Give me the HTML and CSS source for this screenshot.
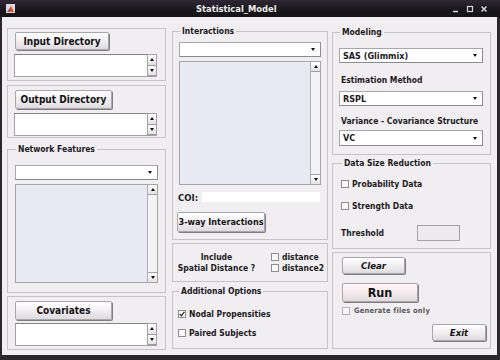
FILE: index.html
```html
<!DOCTYPE html>
<html lang="en">
<head>
    <meta charset="UTF-8">
    <title>Statistical_Model</title>
    <link rel="stylesheet" href="styles.css">
</head>
<body>
    <div class="window">
        <div class="titlebar">
            <span class="app-icon">
                <svg width="9" height="9" viewBox="0 0 9 9">
                    <rect width="9" height="9" fill="#d9d6dc"/>
                    <path d="M1 8 L3.5 4.5 L5 2 L6.5 5 L8 8 Z" fill="#e0531a"/>
                    <path d="M1 8 L3.5 4.5 L4.5 6 Z" fill="#3f6fb5"/>
                </svg>
            </span>
            <span class="title">Statistical_Model</span>
            <span class="controls">
                <svg width="40" height="9" viewBox="0 0 40 9">
                    <path d="M0 7.5 H5" stroke="#d6d6d6" stroke-width="1.5"/>
                    <rect x="14.5" y="2.5" width="5" height="5" fill="none" stroke="#d6d6d6" stroke-width="1.2"/>
                    <path d="M28.5 2.5 L33.5 7.5 M33.5 2.5 L28.5 7.5" stroke="#d6d6d6" stroke-width="1.5"/>
                </svg>
            </span>
        </div>

        <div class="content">
            <!-- left column -->
            <div class="col col-left">
                <div class="box dir-box">
                    <button class="btn btn-dir">Input Directory</button>
                    <div class="spin-field">
                        <div class="field"></div>
                        <div class="spin"><span class="spin-btn"><i class="tri up"></i></span><span class="spin-btn"><i class="tri down"></i></span></div>
                    </div>
                </div>
                <div class="box dir-box out-box">
                    <button class="btn btn-out">Output Directory</button>
                    <div class="spin-field">
                        <div class="field"></div>
                        <div class="spin"><span class="spin-btn"><i class="tri up"></i></span><span class="spin-btn"><i class="tri down"></i></span></div>
                    </div>
                </div>
                <fieldset class="group network">
                    <legend>Network Features</legend>
                    <div class="combo"><span></span><i class="tri down"></i></div>
                    <div class="list list-net">
                        <div class="vscroll"><span class="sb-btn"><i class="tri up"></i></span><span class="sb-btn"><i class="tri down"></i></span></div>
                    </div>
                </fieldset>
                <div class="box cov-box">
                    <button class="btn btn-cov">Covariates</button>
                    <div class="spin-field">
                        <div class="field"></div>
                        <div class="spin"><span class="spin-btn"><i class="tri up"></i></span><span class="spin-btn"><i class="tri down"></i></span></div>
                    </div>
                </div>
            </div>

            <!-- middle column -->
            <div class="col col-mid">
                <fieldset class="group interactions">
                    <legend>Interactions</legend>
                    <div class="combo"><span></span><i class="tri down"></i></div>
                    <div class="list list-int">
                        <div class="vscroll"><span class="sb-btn"><i class="tri up"></i></span><span class="sb-btn"><i class="tri down"></i></span></div>
                    </div>
                    <div class="coi-row">
                        <span class="coi-label">COI:</span>
                        <span class="coi-field"></span>
                    </div>
                    <button class="btn btn-3way">3-way Interactions</button>
                </fieldset>
                <div class="box include">
                    <div class="include-text">Include<br>Spatial Distance ?</div>
                    <div class="include-checks">
                        <label class="check"><span class="cb"></span>distance</label>
                        <label class="check"><span class="cb"></span>distance2</label>
                    </div>
                </div>
                <fieldset class="group options">
                    <legend>Additional Options</legend>
                    <label class="check"><span class="cb checked"><svg width="6" height="6" viewBox="0 0 6 6"><path d="M0.8 3 L2.4 4.8 L5.4 0.8" fill="none" stroke="#222" stroke-width="1.2"/></svg></span>Nodal Propensities</label>
                    <label class="check"><span class="cb"></span>Paired Subjects</label>
                </fieldset>
            </div>

            <!-- right column -->
            <div class="col col-right">
                <fieldset class="group modeling">
                    <legend>Modeling</legend>
                    <div class="combo"><span>SAS (Glimmix)</span><i class="tri down"></i></div>
                    <div class="field-label est">Estimation Method</div>
                    <div class="combo combo-rspl"><span>RSPL</span><i class="tri down"></i></div>
                    <div class="field-label var">Variance - Covariance Structure</div>
                    <div class="combo combo-vc"><span>VC</span><i class="tri down"></i></div>
                </fieldset>
                <fieldset class="group reduction">
                    <legend>Data Size Reduction</legend>
                    <label class="check"><span class="cb"></span>Probability Data</label>
                    <label class="check"><span class="cb"></span>Strength Data</label>
                    <div class="threshold-row">
                        <span>Threshold</span>
                        <span class="threshold-field"></span>
                    </div>
                </fieldset>
                <div class="box actions">
                    <button class="btn btn-clear">Clear</button>
                    <button class="btn btn-run">Run</button>
                    <label class="check gen"><span class="cb"></span>Generate files only</label>
                    <button class="btn btn-exit">Exit</button>
                </div>
            </div>
        </div>
    </div>
</body>
</html>
```

FILE: styles.css
```css
* {
    box-sizing: border-box;
    margin: 0;
    padding: 0;
}

body {
    font-family: "DejaVu Sans Condensed", "DejaVu Sans", sans-serif;
    font-weight: bold;
    font-size: 8.5px;
    color: #1c1b1d;
    background: #fff;
}

.window {
    width: 500px;
    height: 360px;
    background: #2a282c;
    display: flex;
    flex-direction: column;
}

/* title bar */
.titlebar {
    height: 17px;
    display: flex;
    align-items: center;
    padding-left: 6px;
    background: linear-gradient(#2f2735, #19171b 60%, #141316);
    color: #ececec;
}

.app-icon svg {
    display: block;
}

.title {
    margin-left: 181px;
    font-size: 9.3px;
    line-height: 17px;
}

.controls {
    margin-left: auto;
    margin-right: 7px;
}

.controls svg {
    display: block;
}

/* window body */
.content {
    flex: 1;
    margin: 0 3px 5px 2px;
    background: #f1eef1;
    display: flex;
    padding: 8px 0 0 5px;
}

.col {
    display: flex;
    flex-direction: column;
}

.col-left {
    width: 159px;
    margin-top: 3px;
}

.col-mid {
    width: 156px;
    margin-left: 6px;
}

.col-right {
    width: 159px;
    margin-left: 4px;
    margin-top: 1px;
}

.box {
    border: 1px solid #c6c3c7;
}

.group {
    border: 1px solid #c6c3c7;
    min-width: 0;
}

.group legend {
    line-height: 12px;
    padding: 0 2px;
    margin-left: 1px;
}

/* buttons */
.btn {
    display: block;
    font: inherit;
    color: #141314;
    height: 18px;
    border: 1px solid #a9a7ab;
    border-radius: 2px;
    background: linear-gradient(#ffffff, #f2f0f3 45%, #dedcdf);
    box-shadow: 1px 1px 0 #7f7d81;
    font-size: 10px;
    text-align: center;
}

/* text fields with spinner */
.field {
    flex: 1;
    background: #fff;
    border: 1px solid #a3a1a5;
    border-top-color: #858387;
    border-right: none;
}

.spin-field {
    display: flex;
    width: 143px;
    height: 23px;
}

.spin {
    width: 10px;
    display: flex;
    flex-direction: column;
    border: 1px solid #a3a1a5;
    background: #fff;
}

.spin-btn {
    flex: 1;
    display: flex;
    align-items: center;
    justify-content: center;
    background: linear-gradient(#fff, #e3e1e4);
    border-bottom: 1px solid #9b999d;
}

.tri {
    display: block;
    width: 0;
    height: 0;
    border-left: 2.5px solid transparent;
    border-right: 2.5px solid transparent;
}

.tri.up {
    border-bottom: 3px solid #111;
}

.tri.down {
    border-top: 3px solid #111;
}

/* left column */
.dir-box {
    height: 53px;
    padding: 3px 0 0 6px;
}

.dir-box .btn {
    margin-left: 1px;
    margin-bottom: 4px;
}

.btn-dir {
    width: 94px;
}

.out-box {
    margin-top: 4px;
    padding-top: 4px;
}

.btn-out {
    width: 97px;
    height: 19px;
}

.network {
    height: 150px;
    margin-top: 5px;
    padding: 10px 7px 0 7px;
}

.combo {
    height: 15px;
    display: flex;
    align-items: center;
    padding: 0 5px 0 3px;
    background: #fff;
    border: 1px solid #a8a6aa;
    border-bottom-color: #8c8a8e;
    border-right-color: #8c8a8e;
    font-size: 9px;
}

.combo .tri {
    margin-left: auto;
}

.list {
    display: flex;
    justify-content: flex-end;
    margin-top: 4px;
    background: #e7e9f3;
    border: 1px solid #a6a4a8;
}

.list-net {
    height: 99px;
}

.vscroll {
    width: 10px;
    display: flex;
    flex-direction: column;
    justify-content: space-between;
    background: #f3f2f4;
    border-left: 1px solid #b0aeb2;
}

.sb-btn {
    height: 10px;
    display: flex;
    align-items: center;
    justify-content: center;
    background: linear-gradient(#fff, #e4e2e5);
    border-bottom: 1px solid #a19fa3;
}

.sb-btn:last-child {
    border-bottom: none;
    border-top: 1px solid #a19fa3;
}

.cov-box {
    height: 54px;
    margin-top: 3px;
    padding: 4px 0 0 7px;
}

.btn-cov {
    width: 97px;
    height: 19px;
    margin-bottom: 3px;
}

.cov-box .spin-field {
    width: 142px;
}

/* middle column */
.interactions {
    height: 215px;
    padding: 5px 6px 0 6px;
}

.list-int {
    height: 124px;
}

.coi-row {
    display: flex;
    align-items: center;
    margin-top: 7px;
    height: 10px;
}

.coi-label {
    font-size: 9.5px;
    width: 24px;
    margin-left: -1px;
}

.coi-field {
    flex: 1;
    height: 10px;
    background: #fff;
    margin-right: 1px;
}

.btn-3way {
    width: 88px;
    height: 20px;
    margin-top: 10px;
    margin-left: -2px;
    font-size: 9px;
    padding: 0;
}

.include {
    height: 39px;
    margin-top: 3px;
    display: flex;
    align-items: center;
}

.include-text {
    width: 87px;
    text-align: center;
    line-height: 11px;
}

.include-checks {
    margin-left: 11px;
    display: flex;
    flex-direction: column;
    gap: 0;
}

.check {
    display: flex;
    align-items: center;
    height: 12px;
    line-height: 12px;
}

.include-checks .check {
    height: 11px;
}

.cb {
    width: 8px;
    height: 8px;
    margin-right: 3px;
    border: 1px solid #8e8c90;
    background: #f9f8fa;
    display: flex;
    align-items: center;
    justify-content: center;
}

.cb svg {
    display: block;
}

.options {
    height: 64px;
    margin-top: 3px;
    padding: 11px 5px 0 5px;
}

.options .check + .check {
    margin-top: 7px;
}

/* right column */
.modeling {
    height: 129px;
    padding: 10px 7px 0 6px;
}

.field-label {
    line-height: 12px;
    margin-left: 2px;
}

.field-label.est {
    margin-top: 11px;
}

.combo-rspl {
    margin-top: 5px;
}

.field-label.var {
    margin-top: 9px;
}

.combo-vc {
    margin-top: 3px;
    height: 16px;
}

.reduction {
    height: 92px;
    margin-top: 2px;
    padding: 9px 8px 0 8px;
}

.reduction .check + .check {
    margin-top: 10px;
}

.threshold-row {
    display: flex;
    align-items: center;
    margin-top: 13px;
}

.threshold-field {
    width: 43px;
    height: 16px;
    margin-left: 33px;
    background: #edebee;
    border: 1px solid #a3a1a5;
}

.actions {
    height: 97px;
    margin-top: 3px;
    padding: 4px 4px 0 9px;
    display: flex;
    flex-direction: column;
    align-items: flex-start;
}

.btn-clear {
    width: 63px;
    height: 17px;
    font-style: italic;
    font-size: 9.5px;
}

.btn-run {
    width: 76px;
    height: 19px;
    margin-top: 9px;
    font-size: 12.5px;
    background: linear-gradient(#fff8f8, #f6eced 45%, #e2dcde);
}

.gen {
    margin-top: 3px;
    color: #5a585c;
    font-size: 7.5px;
    letter-spacing: 0.2px;
}

.gen .cb {
    border-color: #b0aeb2;
    margin-right: 4px;
}

.btn-exit {
    width: 54px;
    height: 17px;
    margin-top: 7px;
    align-self: flex-end;
    font-style: italic;
    font-size: 9.5px;
}
```
